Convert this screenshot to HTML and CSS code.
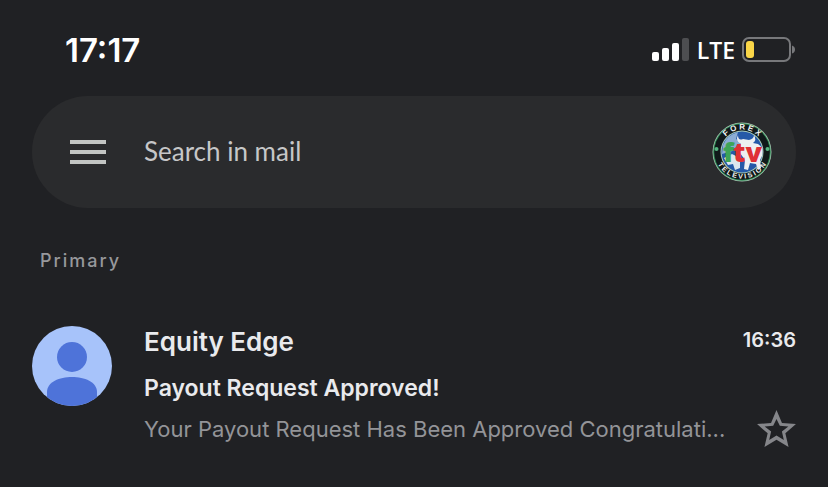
FILE: index.html
```html
<!DOCTYPE html>
<html lang="en">
<head>
<meta charset="utf-8">
<meta name="viewport" content="width=device-width, initial-scale=1">
<title>Mail</title>
<link rel="stylesheet" href="styles.css">
</head>
<body>
<header class="status">
  <time class="clock">17:17</time>
  <div class="indicators">
    <svg class="signal" viewBox="0 0 38 24" aria-hidden="true">
      <rect x="0" y="14" width="7" height="9" rx="2" fill="#fff"/>
      <rect x="10" y="10" width="7" height="13" rx="2" fill="#fff"/>
      <rect x="20" y="5" width="7" height="18" rx="2" fill="#fff"/>
      <rect x="30" y="0" width="7" height="23" rx="2" fill="#4d4e51"/>
    </svg>
    <span class="network">LTE</span>
    <svg class="battery" viewBox="0 0 54 26" aria-hidden="true">
      <rect x="1" y="1" width="47" height="23" rx="6" fill="none" stroke="#77787b" stroke-width="2"/>
      <rect x="4" y="4" width="8" height="17" rx="3" fill="#fad648"/>
      <path d="M50 8.500Q53 9.500 53 12.500Q53 15.500 50 16.500Z" fill="#77787b"/>
    </svg>
  </div>
</header>

<main class="page">
  <form class="search">
    <button class="icon-button" type="button" aria-label="Menu">
      <svg class="menu-icon" viewBox="0 0 36 24"><path d="M0 0H36V4H0ZM0 10H36V14H0ZM0 20H36V24H0Z" fill="#c2c5c3"/></svg>
    </button>
    <input class="search-input" type="text" placeholder="Search in mail" aria-label="Search in mail">
    <button class="icon-button" type="button" aria-label="Account">
      <svg class="account-logo" viewBox="0 0 60 60">
        <defs>
          <path id="arc-top" d="M7.500 30A22.500 22.500 0 0 1 52.500 30"/>
          <path id="arc-bottom" d="M3 24A27.500 27.500 0 1 0 57 24"/>
        </defs>
        <circle cx="30" cy="30" r="29.500" fill="#a9c5b3"/>
        <circle cx="30" cy="30" r="28.800" fill="#2d8b54"/>
        <circle cx="30" cy="30" r="27.800" fill="#10191a"/>
        <circle cx="30" cy="30" r="21.500" fill="#a9cdbb"/>
        <circle cx="30" cy="30" r="20.500" fill="#2559a8"/>
        <path d="M11 23Q15 13 26 10L24 17L29 20L24 28L10 32Z" fill="#8badd4"/>
        <path d="M12 36L20 32L28 36L28 46L23 48L21 42L16 43Z" fill="#dce6ee"/>
        <path d="M26 13Q26 19 31 17L37 18Q42 17 42 13Q45 18 41 21L46 22Q52 25 50 34L48 38L49 46L46 48L44 42L38 41L36 48L32 47L33 38L28 31L29 22Q23 19 26 13Z" fill="#edf0f2"/>
        <text class="logo-f" x="11" y="40">f</text>
        <text class="logo-tv" x="21" y="40">tv</text>
        <text class="logo-ring logo-ring-top"><textPath href="#arc-top" startOffset="50%">F O R E X</textPath></text>
        <text class="logo-ring"><textPath href="#arc-bottom" startOffset="50%">T E L E V I S I O N</textPath></text>
        <circle cx="4.500" cy="27" r="2" fill="#55b580"/>
        <circle cx="55.500" cy="27" r="2" fill="#55b580"/>
      </svg>
    </button>
  </form>

  <h1 class="section-title">Primary</h1>

  <article class="message">
    <svg class="avatar" viewBox="0 0 80 80" aria-hidden="true">
      <defs><clipPath id="avatar-clip"><circle cx="40" cy="40" r="40"/></clipPath></defs>
      <g clip-path="url(#avatar-clip)">
        <rect width="80" height="80" fill="#a7c3fa"/>
        <circle cx="40" cy="31" r="15" fill="#4e73d9"/>
        <path d="M15 80V66C15 46 65 46 65 66V80Z" fill="#4e73d9"/>
      </g>
    </svg>
    <div class="content">
      <div class="row row-top">
        <h2 class="sender">Equity Edge</h2>
        <time class="time">16:36</time>
      </div>
      <h3 class="subject">Payout Request Approved!</h3>
      <div class="row">
        <p class="snippet">Your Payout Request Has Been Approved Congratulati...</p>
        <button class="icon-button" type="button" aria-label="Star">
          <svg class="star" viewBox="2 2 20 19"><path fill="#85868a" d="M22 9.240l-7.190-.62L12 2 9.190 8.630 2 9.240l5.460 4.730L5.820 21 12 17.270 18.180 21l-1.630-7.030L22 9.240zM12 15.100l-3.760 2.270 1-4.280-3.320-2.580 4.380-.38L12 6.600l1.710 3.540 4.380.38-3.320 2.580 1 4.280L12 15.100z"/></svg>
        </button>
      </div>
    </div>
  </article>
</main>
</body>
</html>
```
FILE: styles.css
```css
* {
  box-sizing: border-box;
}

body {
  margin: 0;
  background: #202124;
  color: #e9eaed;
  font-family: Inter, "Liberation Sans", sans-serif;
}

h1, h2, h3, p {
  margin: 0;
}

.status {
  display: flex;
  align-items: center;
  justify-content: space-between;
  height: 96px;
  padding: 4px 32px 0 65px;
  color: #fff;
}

.clock {
  font-size: 33px;
  font-weight: 600;
}

.indicators {
  display: flex;
  align-items: center;
  gap: 7px;
}

.signal {
  width: 38px;
  height: 24px;
}

.network {
  font-family: "Open Sans", sans-serif;
  font-size: 23px;
  font-weight: 600;
  line-height: 24px;
}

.battery {
  width: 54px;
  height: 26px;
}

.page {
  padding: 0 32px;
}

.search {
  display: flex;
  align-items: center;
  height: 112px;
  padding: 0 24px 0 38px;
  border-radius: 56px;
  background: #2a2b2d;
}

.icon-button {
  display: block;
  flex: none;
  padding: 0;
  border: 0;
  background: none;
}

.icon-button svg {
  display: block;
}

.menu-icon {
  width: 36px;
  height: 24px;
}

.search-input {
  flex: 1;
  min-width: 0;
  margin: 0 16px 0 38px;
  padding: 0 0 2px;
  border: 0;
  outline: 0;
  background: none;
  color: #c6c7c8;
  font-family: Lato, sans-serif;
  font-size: 26px;
  line-height: 32px;
}

.search-input::placeholder {
  color: #c6c7c8;
  opacity: 1;
}

.account-logo {
  width: 60px;
  height: 60px;
}

.logo-f,
.logo-tv {
  font-family: "Open Sans", sans-serif;
  font-size: 27px;
  font-weight: 800;
}

.logo-f {
  fill: #3da556;
}

.logo-tv {
  fill: #df3035;
}

.logo-ring {
  fill: #f2f5f3;
  font-family: "Liberation Sans", sans-serif;
  font-size: 7px;
  font-weight: 700;
  text-anchor: middle;
}

.logo-ring-top {
  font-size: 8px;
}

.section-title {
  margin: 40px 8px 52px;
  color: #97989c;
  font-size: 18px;
  font-weight: 500;
  line-height: 26px;
  letter-spacing: 2px;
}

.message {
  display: flex;
  gap: 32px;
}

.avatar {
  flex: none;
  width: 80px;
  height: 80px;
}

.content {
  flex: 1;
  min-width: 0;
}

.row {
  display: flex;
  align-items: center;
  justify-content: space-between;
}

.row-top {
  align-items: flex-start;
}

.sender {
  font-size: 26px;
  font-weight: 600;
  line-height: 32px;
}

.time {
  font-size: 20px;
  font-weight: 600;
  line-height: 28px;
}

.subject {
  margin: 14px 0 6px;
  font-size: 23px;
  font-weight: 600;
  line-height: 32px;
}

.snippet {
  color: #939498;
  font-size: 22px;
  line-height: 32px;
  white-space: nowrap;
}

.star {
  width: 39px;
  height: 37px;
}
```
